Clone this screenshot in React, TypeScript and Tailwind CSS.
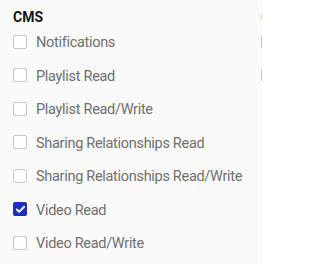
import { Check } from 'lucide-react';

const cms = [
  { label: 'Notifications', checked: false },
  { label: 'Playlist Read', checked: false },
  { label: 'Playlist Read/Write', checked: false },
  { label: 'Sharing Relationships Read', checked: false },
  { label: 'Sharing Relationships Read/Write', checked: false },
  { label: 'Video Read', checked: true },
  { label: 'Video Read/Write', checked: false },
];

const Box = ({ checked }: { checked: boolean }) =>
  checked ? (
    <span className="grid h-[14px] w-[14px] shrink-0 place-items-center rounded-[2px] bg-[#1c30bd]">
      <Check className="h-[11px] w-[11px] text-white" strokeWidth={4} />
    </span>
  ) : (
    <span className="h-[14px] w-[14px] shrink-0 rounded-[2px] border border-[#c8c8c8] bg-white" />
  );

const App = () => {
  return (
    <div
      className="flex h-[264px] w-[262px] gap-[19px] overflow-hidden bg-[#fafafa] pl-[13px] pt-[9px]"
      style={{ fontFamily: 'Roboto, "Noto Sans", sans-serif' }}
    >
      <div className="flex shrink-0 flex-col">
        <h3 className="h-[16px] text-[14px] font-bold leading-[16px] text-[#161616]">CMS</h3>
        <ul className="mt-[5px] flex flex-col gap-[10.5px]">
          {cms.map((item) => (
            <li key={item.label} className="flex h-[23px] items-center gap-[9px]">
              <Box checked={item.checked} />
              <span className="whitespace-nowrap pt-[2px] text-[14.5px] leading-[23px] tracking-[-0.3px] text-[#6f6f6f]">
                {item.label}
              </span>
            </li>
          ))}
        </ul>
      </div>
      <div className="flex shrink-0 flex-col">
        <h3 className="h-[16px] text-[14px] font-bold leading-[16px] text-[#161616]">Content</h3>
        <ul className="mt-[5px] flex flex-col gap-[10.5px]">
          <li className="flex h-[23px] items-center">
            <Box checked={false} />
          </li>
          <li className="flex h-[23px] items-center">
            <Box checked={false} />
          </li>
        </ul>
      </div>
    </div>
  );
};

export default App;
